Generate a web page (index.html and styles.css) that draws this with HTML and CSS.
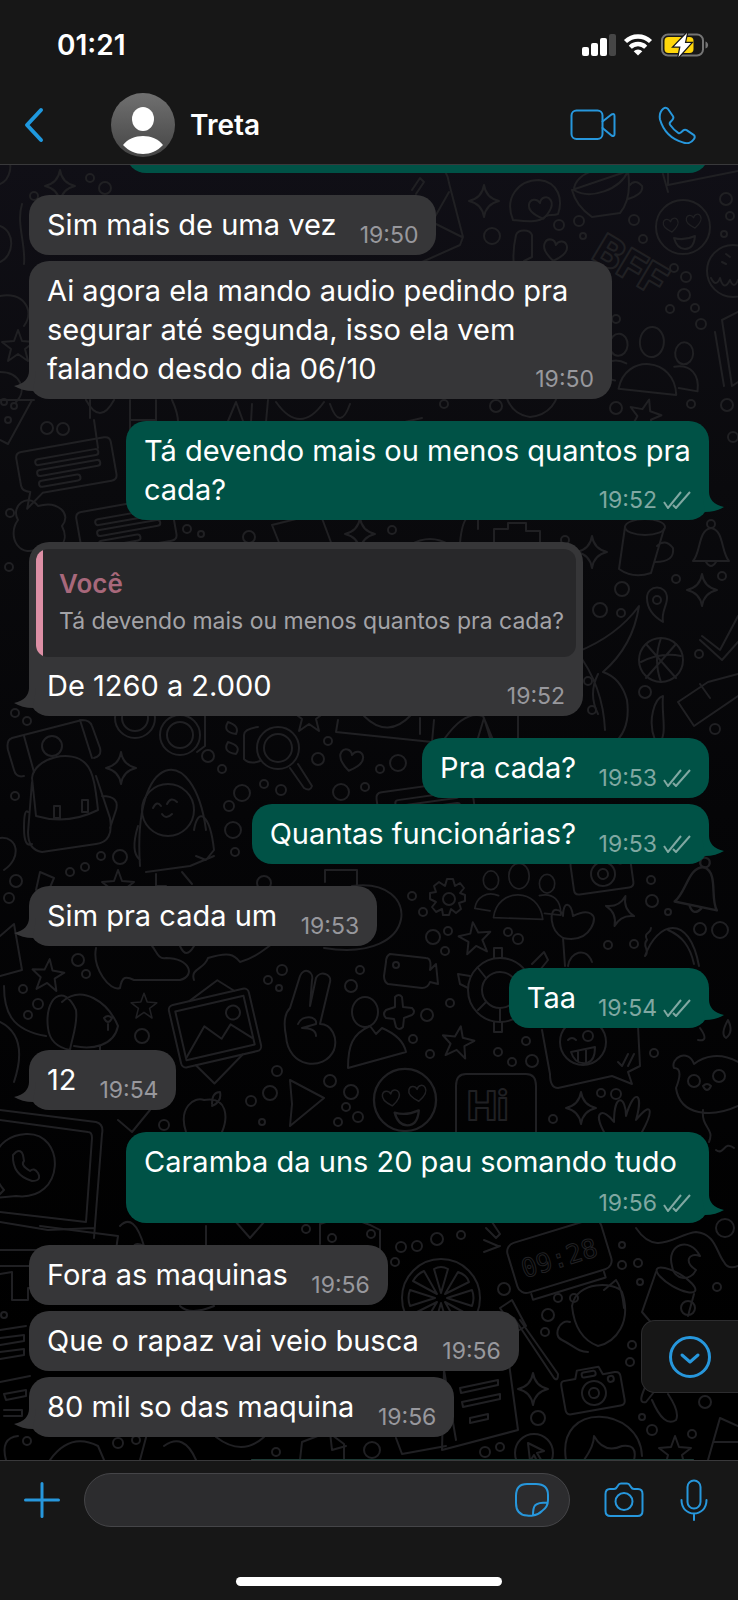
FILE: index.html
```html
<!DOCTYPE html>
<html lang="pt-BR">
<head>
<meta charset="utf-8">
<meta name="viewport" content="width=device-width, initial-scale=1">
<title>Treta</title>
<link rel="stylesheet" href="styles.css">
</head>
<body>
<div class="app">
  <header class="header">
    <div class="status">
      <time class="clock">01:21</time>
      <svg class="status-icons" viewBox="0 0 128 24" aria-hidden="true">
        <g fill="#fff">
          <rect x="0" y="14" width="7" height="9" rx="2"/>
          <rect x="9" y="10" width="7" height="13" rx="2"/>
          <rect x="18" y="5" width="7" height="18" rx="2"/>
          <rect x="27" y="1" width="7" height="22" rx="2" fill="#464646"/>
        </g>
        <g fill="none" stroke="#fff" stroke-width="4.4">
          <path d="M43.500 8.500a18 18 0 0 1 25 0"/>
          <path d="M48.300 14.200a11 11 0 0 1 15.400 0"/>
        </g>
        <path d="M56 22.500l-4.300-4.200a6.300 6.300 0 0 1 8.600 0z" fill="#fff"/>
        <rect x="80" y="1.500" width="41" height="21" rx="6" fill="none" stroke="#747474" stroke-width="2"/>
        <rect x="82.500" y="4" width="29" height="16" rx="4" fill="#ffd60a"/>
        <path d="M123.500 8.500c3.500 1 3.500 6 0 7z" fill="#747474"/>
        <path d="M105 0 92 13.500h6.500L96.500 24 109 10h-6.200z" fill="#fff" stroke="#171717" stroke-width="2.500" paint-order="stroke"/>
      </svg>
    </div>
    <div class="nav">
      <button class="icon-button back" type="button" aria-label="Voltar">
        <svg width="20" height="36" viewBox="0 0 20 36"><path d="M17 3 3 18l14 15" fill="none" stroke="#1f98de" stroke-width="4" stroke-linecap="round" stroke-linejoin="round"/></svg>
      </button>
      <svg class="avatar" viewBox="0 0 64 64" role="img" aria-label="Foto do contato">
        <defs><linearGradient id="av" x2="0" y2="1"><stop stop-color="#707070"/><stop offset="1" stop-color="#454545"/></linearGradient></defs>
        <circle cx="32" cy="32" r="32" fill="url(#av)"/>
        <ellipse cx="32" cy="26" rx="11" ry="12" fill="#fff"/>
        <path d="M12 52c9-12 31-12 40 0-11 12-29 12-40 0z" fill="#fff"/>
      </svg>
      <h1 class="name">Treta</h1>
      <button class="icon-button" type="button" aria-label="Chamada de vídeo">
        <svg class="line-icon thin" width="46" height="32" viewBox="0 0 46 32"><rect x="1.500" y="1.500" width="31" height="28.500" rx="5"/><path d="M32.500 12.500 41.500 5.500q3-1.500 3 1.500v18q0 3-3 1.500L32.500 19"/></svg>
      </button>
      <button class="icon-button call" type="button" aria-label="Chamada de voz">
        <svg class="line-icon thin" width="38" height="38" viewBox="0 0 38 38"><path d="M5.500 2.500Q8 .8 10 3l5 7.200q1 1.800-.6 3.600l-2.200 2.400q-1 1.300 0 2.800 3.500 5 8 7.800 1.400.8 2.600-.2l2.400-2.200q1.700-1.200 3.400-.2l7 4.600q2 1.700.4 4.200-3.800 6-11.200 3.400Q7.200 31.200 2 13.500q-1.300-7 3.500-11z"/></svg>
      </button>
    </div>
  </header>

  <main class="chat">
    <svg class="doodles" viewBox="0 165 738 1295" preserveAspectRatio="xMidYMin slice" aria-hidden="true">
      <defs>
        <path id="spark" d="M0-16Q2-3 15 0 2 3 0 16-2 3-15 0-2-3 0-16z"/>
        <path id="star" d="M0-16 4-5l12 1-9 7 3 12L0 8l-10 7 3-12-9-7 12-1z"/>
        <path id="heart" d="M0 11C-9 5-13-1-11-6c2-5 9-5 11 1 2-6 9-6 11-1 2 5-2 11-11 17z"/>
        <g id="bell"><path d="M-18 17C-10 8-13-14 0-16 13-14 10 8 18 17z"/><circle cy="-20" r="4"/><path d="M-5 18q5 8 10 0"/></g>
        <g id="people"><ellipse cy="-27" rx="12" ry="15"/><path d="M-30 22C-26-14 24-14 28 24zM-24-4c-14-6-26 2-28 15l18 3M24-4c16-4 26 6 25 23l-19-2"/><ellipse cx="-33" cy="-22" rx="9" ry="11"/><ellipse cx="33" cy="-18" rx="9" ry="11"/></g>
        <g id="love"><circle r="27"/><use href="#heart" transform="translate(-12 -2) scale(.65) rotate(-8)"/><use href="#heart" transform="translate(11 -6) scale(.65) rotate(-8)"/><path d="M-9 11q10 3 21-2-1 13-10 13-8 0-11-11z"/></g>
        <g id="camera"><path d="M-28-17h12l3-8h22l3 8h12q5 0 5 5v24q0 5-5 5h-50q-5 0-5-5v-24q0-5 3-5z"/><circle r="12"/><circle r="5"/><circle cx="19" cy="-11" r="3"/><rect x="-9" y="-22" width="14" height="5" rx="2"/></g>
        <g id="note"><path d="M-44-20h84q6 0 6 6v32q0 6-6 6h-70l-18 13 6-16q-8-2-8-8v-27q0-6 6-6z"/><rect x="-32" y="-10" width="64" height="6" rx="3"/><rect x="-32" y="1" width="64" height="6" rx="3"/><rect x="-32" y="12" width="42" height="6" rx="3"/></g>
      </defs>
      <g class="doodle-lines">
        <use href="#spark" x="60" y="186"/><use href="#spark" x="484" y="201"/><use href="#spark" x="592" y="552"/><use href="#spark" x="360" y="534"/><use href="#spark" x="702" y="590"/><use href="#spark" x="121" y="768"/>
        <use href="#spark" transform="translate(620 911) rotate(20)"/><use href="#spark" x="581" y="1108"/><use href="#spark" x="533" y="1389"/>
        <use href="#star" transform="translate(645 415) rotate(15)"/><use href="#star" x="309" y="716"/><use href="#star" transform="translate(475 938) rotate(-8)"/><use href="#star" transform="translate(48 975) rotate(6)"/><use href="#star" transform="translate(144 1006) scale(.8)"/><use href="#star" transform="translate(458 1042) rotate(10)"/><use href="#star" x="675" y="1452"/><use href="#star" x="118" y="886"/><use href="#star" x="18" y="346"/>
        <use href="#heart" transform="translate(541 208) rotate(-12)"/><use href="#heart" transform="translate(555 250) rotate(10)"/><use href="#heart" transform="translate(351 760) rotate(12)"/>
        <use href="#love" x="683" y="227"/><use href="#love" transform="translate(405 1100) scale(1.150)"/>
        <use href="#people" transform="translate(650 369) rotate(4)"/><use href="#people" transform="translate(519 899) scale(.85)"/>
        <use href="#bell" x="711" y="544"/><use href="#bell" transform="translate(700 886) scale(1.200) rotate(12)"/>
        <use href="#camera" transform="translate(594 1393) rotate(-10)"/><use href="#camera" transform="translate(603 874) rotate(-8)"/>
        <use href="#note" transform="translate(68 464) rotate(-10)"/><use href="#note" transform="translate(128 524) rotate(-10)"/><use href="#note" transform="translate(428 806) rotate(-8)"/>

        <path d="M513 220c-9-22 5-40 26-40 20 2 24 20 19 34-5 2-8 0-12 2-8 8-24 5-33 4zM572 190q4 16 20 27l28-4q12-14 8-42zM574 190c16 10 46 0 54-19-18-8-54 0-54 19zM629 186q6-8 13 0 2 8-14 13M433 163q14 4 16 20l14 54-3 8-38 17M449 192l-17 30 30 15M412 190l8-12 4 4-8 12M668 167v18l70-14M663 174l5 18"/>
        <path d="M516 235c2-6 14-6 16 0v22l-8 4q-4 20 2 30M516 235q-6 26 2 50"/>
        <text x="590" y="258" transform="rotate(31 590 258)" class="doodle-word">BFF</text>
        <circle cx="733" cy="271" r="26"/><path d="M711 278q5 10 9 0 4 14 10 2 4 10 8 0M722 262l4 2M726 254l4 3"/>
        <path d="M722 320l16-8M722 320l10 66 6-4M715 332l9 54M560 382q-2 32-30 35-22-3-26-30"/>
        <path d="M0 184c10-4 14-20 6-28M0 226c16 6 14 30 0 36M0 296c22-5 36 14 24 30M0 372c20 0 28 18 16 30M22 204c-6 20 4 40 2 60M32 400l-24 44-8-4M34 400H0M90 400v18M86 400q14 26 28 0M94 420l4 28M130 400v46q10 10 26 0v-46M130 420h26M172 400q14 30-4 44M220 440l16-38 14 38 2-36M268 400l-4 44M276 402q24 34 48 0M330 404q10 28 20 0M362 432l60-14M412 436l54-14"/>
        <path d="M18 520c-8-14 10-28 20-14 20-6 34 8 24 20 10 20-10 28-20 20-22 16-36-10-24-26zM280 545l-8-20 48-12 12 32M460 543q2-22 8-26l10-2v14M410 545q20-12 40 0M494 543v-14h14v-6h18v8h14v12"/>
        <ellipse cx="645" cy="527" rx="20" ry="8"/><path d="M625 527l-6 42q14 10 32 4l13-44M657 546q8-8 16 2 2 14-18 14M647 598c0-14 20-14 20 0 0 8-6 14-4 24-10-6-16-14-16-24z"/><circle cx="657" cy="600" r="4"/>
        <path d="M702 636l18 14 18-34M700 640l22 20 16-18"/><circle cx="661" cy="660" r="22"/><path d="M646 644l30 34M676 644l-30 34M661 638q-8 22 0 44M641 662q20-10 40-6"/>
        <path d="M577 652q40-16 62-46-6 40-36 66 18 6 24 28 4 30-14 44M577 652q26 34 28 78M598 674q-10 20 0 40M655 740c-8-20 0-42 8-44-2 20 6 40-6 50M678 702l30-20 30-8M678 702l16 24 44-30M700 684l10 14M445 738q20-28 38-22l10 24M478 738l6-20 6 20M518 716v22"/>
        <path d="M12 738l70-18q8 0 10 6l8 22q2 8-6 10M12 738q-6 2-4 12l6 20q2 8 10 6M80 720l12 38M24 736l10 36"/><circle cx="52" cy="746" r="10"/>
        <circle cx="135" cy="718" r="20"/><circle cx="135" cy="718" r="13"/><circle cx="180" cy="735" r="20"/><circle cx="180" cy="735" r="13"/><path d="M205 716v30l-8 6"/>
        <circle cx="278" cy="748" r="21"/><circle cx="278" cy="748" r="14"/><path d="M290 768l14 20q6 4 8-2l-14-22M258 727q-14 2-14 8v24q6 6 16 2M228 722q12 4 8 12-14-2-8-12M228 742q14 4 8 12-14-2-8-12"/>
        <path d="M32 778c2-20 40-30 54-14 8 8 10 28 12 46-20 10-42 12-62 6zM32 782l-4 50q0 18 14 20l54-8q18-2 14-26l-14-42M28 812q-4-4-4 16 0 20 8 16M102 796q18 0 14 14l-6 18M54 806h6v12h-6zM82 800h6v12h-6z"/>
        <path d="M140 866c-8-116 54-126 66-36M146 872l44-6 24-10M138 826q-8 26 2 34M194 830c4-24 16-16 20 20l-8 10-10-4M156 874v12h10M182 872l10 12"/><circle cx="168" cy="810" r="26"/><path d="M153 808q4-8 8-2M167 804q4-8 10-2M162 814q4 6 10 0"/>
        <path d="M338 720l-2 12 96 10 2-22M364 716q24 24 48-2M420 718v16"/><path d="M0 838c18-2 22 20 4 32M0 936l14-12 8 46-22 6M36 890l4-18 14 6-6 14M325 882v-12h32v16"/>
        <path d="M352 886c70-10 70 78-28 62M96 948c-4 20 14 44 24 40 2-12 6-12 14-8h46c16-4 10-22-14-22-8 2-10-8-14-12M180 946q6 14 14 0M194 980c-4-12 10-10 14-22 20-6 26-4 32 4 16-4 26-14 32-18"/>
        <circle cx="449" cy="899" r="6"/><path d="M445 886l2-7h6l2 7 5-3 4 5-4 5 5 2v6l-6 2 2 6-5 4-5-4-2 6h-6l-1-6-6 3-4-5 4-5-6-3v-6l6-1-2-6 5-4z"/>
        <path d="M563 938c-14-8-14-30-6-28q4 0 6 6c0-16 8-14 10 0 16-8 26-2 18 12q-8 14-28 10zM563 938l2 28M568 966c2-14 18-20 24-4M645 956c12-34 44-44 54 10M645 956c6-6-4-10 2-16-4-8 4-6 4-12M668 930c14 6 22 16 26 34"/>
        <path d="M4 986c0 24 6 44 42 50M0 1022c20 10 24 30 14 60M48 1028c-4-30 16-46 28-18 2 14-4 28-6 40q-20-4-22-22zM62 1002c20-18 46 0 56 24-4 20-26 24-44 20M100 1046v8M104 1018q4-4 8 0-4 8-8 0zM108 1024v6"/>
        <g transform="rotate(-13 215 1028)"><rect x="174" y="996" width="82" height="64" rx="5"/><rect x="180" y="1003" width="70" height="50"/><path d="M181 1050l24-26 14 16 12-12 18 18M196 996l32-14 14 14M188 1060l14 22 34-22"/><circle cx="236" cy="1017" r="7"/></g>
        <path d="M290 1008l10-32c4-10 14-4 12 4l-2 26 6-28c4-8 16-4 14 4l-10 42c12 0 18 14 14 26-10 22-46 18-48-14q-4-20 4-28zM298 1024c4-10 20-8 18 0l-14 4q14 0 14 8"/>
        <ellipse cx="365" cy="1012" rx="13" ry="15"/><path d="M348 1068c0-22 4-34 22-42l6 8 6-6c14 6 22 14 24 24zM395 997q4-4 7 0l1 10 9 1q4 4 0 7l-8 3-1 9q-4 4-7 0l-2-8-8-1q-4-4 0-8l9-3z"/>
        <path d="M390 954l36 4q6 0 4 12l6-6 2 20-8-2q-2 6-8 6l-34-4q-4-2-4-8l2-14q0-6 4-8z"/><circle cx="396" cy="965" r="3"/>
        <circle cx="500" cy="990" r="32"/><circle cx="500" cy="990" r="18"/><path d="M494 958v-10h8v10M470 976l-12-2 2 10 8 4M532 964l12-12 4 8-8 10M494 1022v10h8v-10M486 978l-8-10M486 1002l-8 8M500 1008v14"/>
        <path d="M542 1030l8 44q0 14 8 14l54-12 20 8-4-12 12-6-2-40M728 1020q6 12-2 18-6-4 2-18M700 1028q10 14-2 12M628 1054l-6 12-4-4M634 1054l-6 12"/><circle cx="583" cy="1042" r="23"/><circle cx="588" cy="1036" r="5"/><path d="M568 1040q4-4 8 0M571 1052l24-5q0 14-8 16-12 2-16-11M578 1052v9M586 1050v12"/>
        <path d="M738 1062c-18-10-34-6-44 2-6-16-24-6-20 4 8 0 6 10 2 20 4 28 36 30 62 18M703 1110c-2 18 12 18 6 32M716 1150c8 6 8-10 18-2"/><circle cx="694" cy="1081" r="6"/><circle cx="719" cy="1076" r="6"/><path d="M703 1086q4-4 8 0-4 8-8 0"/>
        <path d="M290 1080l34 18-34 28 2-22zM186 1132c-8-24 8-36 18-32 24-4 24 18 18 32M212 1104c0-10 4-12 8-12q2 10-8 14M118 1120l14 12 18-22M604 1132c-12-22 0-24 10-10 0-30 12-26 12-6 8-28 18-24 10 4 16-20 18-10 6 12"/>
        <path d="M456 1132v-46q0-12 10-12h60q10 0 10 12v46"/><text x="467" y="1120" class="doodle-word hi">Hi</text>
        <path d="M0 1110l96 12q8 2 6 12l-8 104M0 1120l88 12q4 0 4 6l-6 84-86-10M0 1222l48 8 46-2"/><path d="M4 1190l-8 8 20-2c50 6 50-64 10-62-34 2-40 36-22 56z"/><path d="M16 1152q5-3 7 3l1 6q-4 4 6 10 4-4 8 2 4 8-6 8-20-6-19-26z"/>
        <path d="M0 1250h40v16h-40M40 1226l78 10-4 28M0 1274l12-2v28h16v-12h8M120 1226q14-14 24 20-16-8-10 18M206 1226v26M236 1222l14 16 14-16M320 1244v-20q30-12 60 6v26M180 1306q10 10 34 0"/>
        <g transform="rotate(-17 560 1258)"><rect x="511" y="1230" width="98" height="52" rx="9"/><path d="M522 1284v6h76v-6"/><text x="520" y="1267" class="doodle-clock">09:28</text></g>
        <circle cx="441" cy="1298" r="39"/><path d="M441 1293l-7-24q7-4 14 0zM445 1294l13-22q9 3 11 10zM447 1298l25-8q3 8 0 16zM445 1302l24 13q-4 7-11 10zM441 1303l7 24q-7 4-14 0zM437 1302l-13 22q-9-3-11-10zM435 1298l-25 8q-3-8 0-16zM437 1294l-24-13q4-7 11-10z"/>
        <path d="M486 1228l10 10 4-4-8-12M484 1240l14 6M484 1252l16-6M500 1308l12-8 14 26-10 6zM514 1318l40 60q4 4 4-4l-38-54M572 1306c4-26 44-24 50-14 10 30-6 50-24 54-16-6-24-20-26-40zM604 1290l12-10q6 8 8 28M570 1322c-10-4-18 14-8 18 12 6 16 12 26 12"/>
        <path d="M636 1228c20 30 40 6 60 4 20 2 20 20 28 30q4 8 14 4M672 1266c-6-22 18-30 28-10-12-4-16 6-4 14-6 12-22 10-24-4z"/><ellipse cx="676" cy="1280" rx="22" ry="7" transform="rotate(30 676 1280)"/><path d="M656 1272l-14 40 12 14M694 1294l-6 22"/><circle cx="688" cy="1308" r="7"/>
        <path d="M444 1370l64-14 10 74-76 20zM444 1370l12 70M460 1388l38-8v5l-37 8zM462 1402l38-8v5l-37 8zM470 1418l18-4v5l-18 4zM396 1438l6 16 44-8"/>
        <path d="M0 1330l26-4M0 1338l24-3v6l-24 4M0 1352l24-3v6l-24 4M0 1382l30-6M4 1394l22-4v6l-20 4zM4 1410h18v6H4M6 1460q-6-22 12-24M50 1460q20-28 48-14l6 14M140 1460l8-30M164 1446q20-14 32 14M216 1437q26 20 48 0M300 1460l2-18 26-10 16 12v16M330 1432l2 18 14-4M650 1376c-6 14-14 28-4 26l8-10M652 1400q12 28 24 20 4-8-8-26M720 1418l18 8M720 1418l-12 42M714 1442h24"/>
        <circle cx="534" cy="1453" r="19"/><path d="M528 1443l16 8-7 2 6 10-4 2-5-10-4 6z"/><path d="M566 1460c-10-60 74-54 76-4M584 1460q10-14 10-24 10 18 28 10 16-2 12 14"/>
        <g class="dots">
          <circle cx="90" cy="178" r="4"/><circle cx="105" cy="188" r="6"/><circle cx="34" cy="196" r="4"/><circle cx="492" cy="236" r="8"/><circle cx="559" cy="225" r="5"/><circle cx="579" cy="221" r="5"/><circle cx="583" cy="236" r="3"/><circle cx="634" cy="220" r="5"/><circle cx="643" cy="239" r="4"/><circle cx="726" cy="199" r="6"/><circle cx="730" cy="216" r="4"/><circle cx="724" cy="234" r="3"/><circle cx="674" cy="268" r="4"/><circle cx="686" cy="277" r="5"/><circle cx="684" cy="295" r="6"/><circle cx="670" cy="309" r="4"/><circle cx="695" cy="308" r="4"/><circle cx="701" cy="324" r="5"/><circle cx="616" cy="319" r="4"/><circle cx="616" cy="408" r="6"/><circle cx="691" cy="404" r="4"/><circle cx="727" cy="405" r="6"/><circle cx="733" cy="437" r="5"/><circle cx="496" cy="406" r="6"/><circle cx="444" cy="404" r="4"/><circle cx="47" cy="428" r="6"/><circle cx="63" cy="429" r="6"/><circle cx="4" cy="402" r="3"/><circle cx="14" cy="406" r="3"/><circle cx="8" cy="420" r="3"/><circle cx="10" cy="513" r="4"/><circle cx="187" cy="529" r="4"/><circle cx="201" cy="534" r="3"/><circle cx="249" cy="537" r="6"/><circle cx="392" cy="530" r="4"/><circle cx="565" cy="540" r="4"/>
          <circle cx="9" cy="567" r="4"/><circle cx="622" cy="589" r="7"/><circle cx="600" cy="610" r="7"/><circle cx="621" cy="613" r="4"/><circle cx="676" cy="579" r="4"/><circle cx="722" cy="576" r="4"/><circle cx="699" cy="654" r="4"/><circle cx="645" cy="692" r="6"/><circle cx="588" cy="681" r="4"/><circle cx="592" cy="710" r="4"/><circle cx="715" cy="729" r="5"/><circle cx="15" cy="713" r="4"/><circle cx="27" cy="721" r="4"/><circle cx="208" cy="756" r="6"/><circle cx="222" cy="769" r="4"/><circle cx="242" cy="793" r="8"/><circle cx="264" cy="784" r="4"/><circle cx="281" cy="790" r="5"/><circle cx="318" cy="759" r="6"/><circle cx="328" cy="741" r="4"/><circle cx="380" cy="769" r="4"/><circle cx="398" cy="763" r="8"/><circle cx="365" cy="787" r="4"/><circle cx="341" cy="792" r="8"/><circle cx="229" cy="806" r="5"/><circle cx="233" cy="830" r="8"/><circle cx="235" cy="852" r="4"/><circle cx="15" cy="796" r="4"/><circle cx="101" cy="856" r="4"/><circle cx="120" cy="857" r="7"/><circle cx="70" cy="872" r="4"/><circle cx="85" cy="867" r="4"/><circle cx="16" cy="881" r="6"/><circle cx="9" cy="898" r="5"/><circle cx="264" cy="883" r="7"/>
          <circle cx="412" cy="896" r="4"/><circle cx="423" cy="912" r="4"/><circle cx="433" cy="937" r="7"/><circle cx="448" cy="931" r="4"/><circle cx="445" cy="951" r="4"/><circle cx="508" cy="932" r="4"/><circle cx="518" cy="939" r="5"/><circle cx="651" cy="880" r="4"/><circle cx="652" cy="901" r="6"/><circle cx="668" cy="912" r="3"/><circle cx="700" cy="929" r="6"/><circle cx="720" cy="930" r="8"/><circle cx="608" cy="945" r="4"/><circle cx="634" cy="944" r="4"/><circle cx="78" cy="960" r="6"/><circle cx="86" cy="974" r="4"/><circle cx="23" cy="989" r="4"/><circle cx="38" cy="1004" r="5"/><circle cx="28" cy="1015" r="4"/><circle cx="142" cy="1036" r="7"/><circle cx="282" cy="970" r="5"/><circle cx="268" cy="980" r="4"/><circle cx="279" cy="988" r="3"/><circle cx="360" cy="970" r="4"/><circle cx="351" cy="986" r="6"/><circle cx="427" cy="1015" r="6"/><circle cx="450" cy="1003" r="4"/><circle cx="413" cy="1039" r="4"/><circle cx="430" cy="1054" r="4"/><circle cx="498" cy="1052" r="4"/><circle cx="512" cy="1062" r="4"/><circle cx="532" cy="1061" r="6"/><circle cx="526" cy="1041" r="4"/><circle cx="654" cy="1053" r="4"/><circle cx="277" cy="1071" r="5"/><circle cx="270" cy="1093" r="7"/><circle cx="251" cy="1101" r="5"/><circle cx="330" cy="1081" r="6"/><circle cx="351" cy="1092" r="7"/><circle cx="346" cy="1107" r="4"/><circle cx="358" cy="1117" r="5"/><circle cx="338" cy="1122" r="4"/><circle cx="262" cy="1122" r="3"/><circle cx="164" cy="1125" r="5"/><circle cx="553" cy="1119" r="4"/><circle cx="601" cy="1093" r="4"/><circle cx="616" cy="1094" r="5"/>
          <circle cx="306" cy="1229" r="4"/><circle cx="332" cy="1238" r="4"/><circle cx="371" cy="1234" r="4"/><circle cx="401" cy="1247" r="5"/><circle cx="417" cy="1246" r="5"/><circle cx="437" cy="1239" r="6"/><circle cx="461" cy="1235" r="4"/><circle cx="395" cy="1262" r="4"/><circle cx="504" cy="1289" r="6"/><circle cx="622" cy="1245" r="3"/><circle cx="622" cy="1265" r="4"/><circle cx="638" cy="1263" r="4"/><circle cx="640" cy="1282" r="3"/><circle cx="558" cy="1298" r="4"/><circle cx="574" cy="1298" r="4"/><circle cx="548" cy="1315" r="6"/><circle cx="545" cy="1332" r="4"/><circle cx="632" cy="1345" r="4"/><circle cx="630" cy="1362" r="4"/><circle cx="725" cy="1228" r="9"/><circle cx="717" cy="1287" r="4"/><circle cx="538" cy="1418" r="7"/><circle cx="485" cy="1452" r="5"/><circle cx="500" cy="1447" r="4"/><circle cx="372" cy="1450" r="8"/><circle cx="276" cy="1452" r="4"/><circle cx="642" cy="1417" r="3"/><circle cx="652" cy="1430" r="5"/><circle cx="692" cy="1434" r="4"/><circle cx="705" cy="1402" r="6"/><circle cx="27" cy="1441" r="4"/><circle cx="118" cy="1443" r="5"/><circle cx="136" cy="1440" r="4"/><circle cx="4" cy="1315" r="3"/>
        </g>
      </g>
    </svg>

    <div class="thread">
      <div class="peek peek-top"></div>

      <section class="group in">
        <article class="bubble"><p class="text">Sim mais de uma vez</p><span class="meta"><time>19:50</time></span></article>
        <article class="bubble"><p class="text">Ai agora ela mando audio pedindo pra segurar até segunda, isso ela vem falando desdo dia 06/10</p><span class="meta"><time>19:50</time></span></article>
        <svg class="tail" viewBox="0 0 22 24" aria-hidden="true"><path d="M15 0C15 7 10 13 0 15c5 3 12 5 19 5l3-20z"/></svg>
      </section>

      <section class="group out">
        <article class="bubble"><p class="text">Tá devendo mais ou menos quantos pra cada?</p><span class="meta"><time>19:52</time><svg class="ticks" viewBox="0 0 28 18" aria-label="Entregue"><path d="M1 11l4 6L18 1M10 14l3 3L27 1"/></svg></span></article>
        <svg class="tail" viewBox="0 0 22 24" aria-hidden="true"><path d="M15 0C15 7 10 13 0 15c5 3 12 5 19 5l3-20z"/></svg>
      </section>

      <section class="group in">
        <article class="bubble with-quote">
          <blockquote class="quote"><strong class="quote-name">Você</strong><span class="quote-text">Tá devendo mais ou menos quantos pra cada?</span></blockquote>
          <p class="text">De 1260 a 2.000</p><span class="meta"><time>19:52</time></span>
        </article>
        <svg class="tail" viewBox="0 0 22 24" aria-hidden="true"><path d="M15 0C15 7 10 13 0 15c5 3 12 5 19 5l3-20z"/></svg>
      </section>

      <section class="group out">
        <article class="bubble"><p class="text">Pra cada?</p><span class="meta"><time>19:53</time><svg class="ticks" viewBox="0 0 28 18" aria-label="Entregue"><path d="M1 11l4 6L18 1M10 14l3 3L27 1"/></svg></span></article>
        <article class="bubble"><p class="text">Quantas funcionárias?</p><span class="meta"><time>19:53</time><svg class="ticks" viewBox="0 0 28 18" aria-label="Entregue"><path d="M1 11l4 6L18 1M10 14l3 3L27 1"/></svg></span></article>
        <svg class="tail" viewBox="0 0 22 24" aria-hidden="true"><path d="M15 0C15 7 10 13 0 15c5 3 12 5 19 5l3-20z"/></svg>
      </section>

      <section class="group in">
        <article class="bubble"><p class="text">Sim pra cada um</p><span class="meta"><time>19:53</time></span></article>
        <svg class="tail" viewBox="0 0 22 24" aria-hidden="true"><path d="M15 0C15 7 10 13 0 15c5 3 12 5 19 5l3-20z"/></svg>
      </section>

      <section class="group out">
        <article class="bubble"><p class="text">Taa</p><span class="meta"><time>19:54</time><svg class="ticks" viewBox="0 0 28 18" aria-label="Entregue"><path d="M1 11l4 6L18 1M10 14l3 3L27 1"/></svg></span></article>
        <svg class="tail" viewBox="0 0 22 24" aria-hidden="true"><path d="M15 0C15 7 10 13 0 15c5 3 12 5 19 5l3-20z"/></svg>
      </section>

      <section class="group in">
        <article class="bubble"><p class="text">12</p><span class="meta"><time>19:54</time></span></article>
        <svg class="tail" viewBox="0 0 22 24" aria-hidden="true"><path d="M15 0C15 7 10 13 0 15c5 3 12 5 19 5l3-20z"/></svg>
      </section>

      <section class="group out">
        <article class="bubble"><p class="text">Caramba da uns 20 pau somando tudo</p><span class="meta"><time>19:56</time><svg class="ticks" viewBox="0 0 28 18" aria-label="Entregue"><path d="M1 11l4 6L18 1M10 14l3 3L27 1"/></svg></span></article>
        <svg class="tail" viewBox="0 0 22 24" aria-hidden="true"><path d="M15 0C15 7 10 13 0 15c5 3 12 5 19 5l3-20z"/></svg>
      </section>

      <section class="group in">
        <article class="bubble"><p class="text">Fora as maquinas</p><span class="meta"><time>19:56</time></span></article>
        <article class="bubble"><p class="text">Que o rapaz vai veio busca</p><span class="meta"><time>19:56</time></span></article>
        <article class="bubble"><p class="text">80 mil so das maquina</p><span class="meta"><time>19:56</time></span></article>
        <svg class="tail" viewBox="0 0 22 24" aria-hidden="true"><path d="M15 0C15 7 10 13 0 15c5 3 12 5 19 5l3-20z"/></svg>
      </section>

      <div class="peek peek-bottom"></div>
    </div>

    <button class="scroll-down" type="button" aria-label="Ir para o fim">
      <svg class="line-icon" width="42" height="42" viewBox="0 0 42 42"><circle cx="21" cy="21" r="19.500"/><path d="M13 19l8 7 8-7"/></svg>
    </button>
  </main>

  <footer class="footer">
    <form class="composer">
      <button class="icon-button" type="button" aria-label="Anexar">
        <svg class="line-icon" width="36" height="36" viewBox="0 0 36 36"><path d="M18 1.500v33M1.500 18h33"/></svg>
      </button>
      <div class="field">
        <input class="field-input" type="text" aria-label="Mensagem">
        <button class="icon-button" type="button" aria-label="Figurinhas">
          <svg class="line-icon thin" width="34" height="34" viewBox="0 0 34 34"><path d="M18 32.500q-3 .5-6 0Q1 32 1 20v-7Q1 1 12 1h9q12 0 12 11v5q0 7-6 11-4 4-9 4.500zM18 32.500c0-10 1-13 14.500-13"/></svg>
        </button>
      </div>
      <button class="icon-button camera" type="button" aria-label="Câmera">
        <svg class="line-icon thin" width="40" height="36" viewBox="0 0 40 36"><path d="M6 7h4q2 0 3-2l1-1.500Q15 1.500 17 1.500h6q2 0 3 2L27 5q1 2 3 2h4q4.500 0 4.500 5v17q0 5-5 5h-27q-5 0-5-5V12q0-5 4.500-5z"/><circle cx="20" cy="19.500" r="8.500"/></svg>
      </button>
      <button class="icon-button" type="button" aria-label="Gravar áudio">
        <svg class="line-icon thin" width="28" height="42" viewBox="0 0 28 42"><rect x="7.500" y="1.500" width="13" height="28" rx="6.500"/><path d="M1.500 21c0 18 25 18 25 0M14 35v6"/></svg>
      </button>
    </form>
    <div class="home-bar"></div>
  </footer>
</div>
</body>
</html>
```
FILE: styles.css
```css
* {
  box-sizing: border-box;
}

body {
  margin: 0;
  background: #171717;
  color: #fff;
  font-family: Inter, Roboto, "Liberation Sans", sans-serif;
}

button {
  padding: 0;
  border: 0;
  background: none;
  cursor: pointer;
}

svg {
  display: block;
}

.app {
  display: flex;
  flex-direction: column;
  min-height: 100vh;
}

/* Header */

.header {
  background: #171717;
  border-bottom: 1px solid #39393b;
}

.status {
  display: flex;
  align-items: center;
  justify-content: space-between;
  padding: 29px 28px 0 57px;
}

.clock {
  font-size: 28px;
  font-weight: 600;
  line-height: 32px;
}

.status-icons {
  width: 128px;
  height: 24px;
}

.nav {
  display: flex;
  align-items: center;
  height: 80px;
  margin-top: 23px;
  padding: 2px 42px 0 24px;
}

.icon-button {
  display: flex;
  flex: none;
  align-items: center;
  justify-content: center;
}

.avatar {
  flex: none;
  width: 64px;
  height: 64px;
  margin-left: 67px;
}

.name {
  flex: 1;
  margin: 0 0 0 15px;
  font-size: 28px;
  font-weight: 600;
  line-height: 36px;
}

.call {
  margin-left: 42px;
}

.line-icon {
  fill: none;
  stroke: #2797dc;
  stroke-width: 3;
  stroke-linecap: round;
  stroke-linejoin: round;
}

.thin {
  stroke-width: 2;
}

/* Conversation */

.chat {
  position: relative;
  flex: 1;
  overflow: hidden;
  background: linear-gradient(#100f16, #0a0a0d 25%, #050507 50%, #000 90%);
}

.doodles {
  position: absolute;
  inset: 0;
  width: 100%;
  height: 100%;
}

.doodle-lines {
  fill: none;
  stroke: #202023;
  stroke-width: 2;
  stroke-linecap: round;
  stroke-linejoin: round;
}

.doodle-word {
  font-size: 42px;
  font-weight: 800;
}

.hi {
  font-size: 40px;
}

.doodle-clock {
  font-family: "DejaVu Sans Mono", monospace;
  font-size: 26px;
  stroke-width: 1;
}

.thread {
  position: relative;
  display: flex;
  flex-direction: column;
  gap: 22px;
}

.group {
  position: relative;
  display: flex;
  flex-direction: column;
  gap: 6px;
}

.in {
  align-items: flex-start;
  --bubble: #363638;
  --meta: #98989d;
  --meta-space: 82px;
}

.out {
  align-items: flex-end;
  --bubble: #005246;
  --meta: #80a8a2;
  --meta-space: 115px;
}

.bubble {
  position: relative;
  max-width: 79%;
  margin: 0 29px;
  padding: 10px 18px 11px;
  border-radius: 20px;
  background: var(--bubble);
}

.text {
  display: flow-root;
  margin: 0;
  font-size: 29px;
  line-height: 39px;
}

/* Keeps room for the time next to, or below, the last line. */
.text::after {
  content: "";
  float: right;
  width: var(--meta-space);
  height: 31px;
}

.meta {
  position: absolute;
  right: 18px;
  bottom: 6px;
  display: flex;
  align-items: center;
  gap: 6px;
  color: var(--meta);
  font-size: 23px;
  line-height: 28px;
}

.ticks {
  width: 28px;
  height: 18px;
  fill: none;
  stroke: currentColor;
  stroke-width: 2;
}

.tail {
  position: absolute;
  bottom: 4px;
  left: 14px;
  width: 22px;
  height: 24px;
  fill: var(--bubble);
}

.out .tail {
  right: 14px;
  left: auto;
  transform: scaleX(-1);
}

.with-quote {
  padding-top: 7px;
}

.quote {
  display: flex;
  flex-direction: column;
  gap: 4px;
  margin: 0 -11px 9px;
  padding: 18px 12px 20px 23px;
  border-radius: 12px;
  background: linear-gradient(90deg, #dd8fa5 7px, #28282a 7px);
}

.quote-name {
  color: #a8687b;
  font-size: 26px;
  font-weight: 600;
  line-height: 34px;
}

.quote-text {
  color: #a3a3a7;
  font-size: 23px;
  line-height: 32px;
}

.peek {
  align-self: flex-end;
  height: 40px;
  border-radius: 20px;
  background: #005246;
}

.peek-top {
  width: 79%;
  margin: -32px 29px 0 0;
}

.peek-bottom {
  width: 60%;
  height: 1px;
  margin-right: 44px;
  background: #1d3a35;
}

.scroll-down {
  position: absolute;
  right: 0;
  bottom: 67px;
  display: flex;
  align-items: center;
  width: 97px;
  height: 73px;
  padding-left: 27px;
  border: 1px solid #2c2c2e;
  border-right: 0;
  border-radius: 14px 0 0 14px;
  background: #171717;
}

/* Composer */

.footer {
  padding: 12px 0 14px;
  border-top: 1px solid #39393b;
  background: #171717;
}

.composer {
  display: flex;
  align-items: center;
  padding: 0 30px 0 24px;
}

.field {
  display: flex;
  flex: 1;
  align-items: center;
  min-width: 0;
  height: 54px;
  margin-left: 24px;
  padding: 0 20px 0 24px;
  border: 1px solid #454548;
  border-radius: 27px;
  background: #2c2c2e;
}

.field-input {
  flex: 1;
  min-width: 0;
  height: 40px;
  padding: 0;
  border: 0;
  outline: 0;
  background: none;
  color: #fff;
  font: inherit;
  font-size: 29px;
}

.camera {
  margin: 0 36px 0 34px;
}

.home-bar {
  width: 36%;
  height: 9px;
  margin: 50px auto 0;
  border-radius: 5px;
  background: #fff;
}
```
